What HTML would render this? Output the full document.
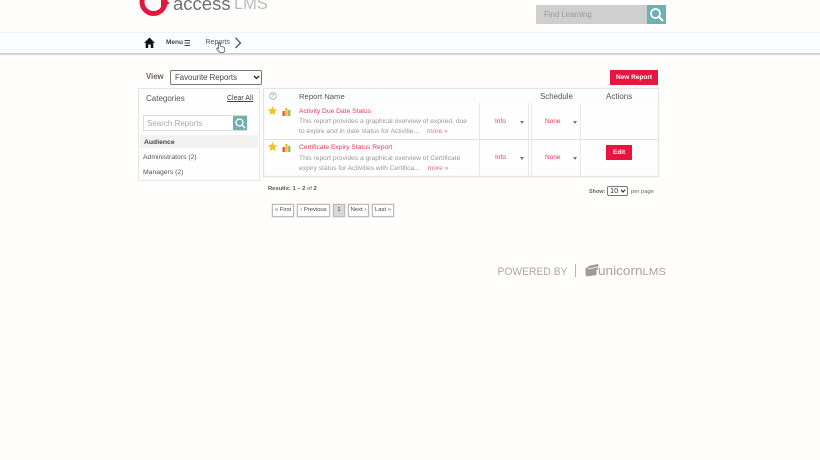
<!DOCTYPE html>
<html lang="en">
<head>
<meta charset="utf-8">
<title>Access LMS Reports</title>
<style>
html,body{margin:0;padding:0;background:#fffefc}
body{width:820px;height:460px;position:relative;overflow:hidden;font-family:"Liberation Sans",sans-serif;color:#444}
.a{position:absolute;white-space:nowrap}
.red{color:#ea3a5a}
.desc{font-size:6.700px;line-height:10px;color:#999}
.pg{position:absolute;top:204px;height:11px;border:1px solid #bbb;background:#fff;font-size:5.900px;line-height:11px;text-align:center;color:#444;box-shadow:0 0 0 1px #eee}
.sel{position:absolute;font-size:6.500px;color:#ea3a5a}
.caret{position:absolute;width:0;height:0;border-left:2.500px solid transparent;border-right:2.500px solid transparent;border-top:3px solid #777}
.vl{position:absolute;width:1px;background:#e6e8ec}
</style>
</head>
<body>
<svg class="a" style="left:0;top:0" width="820" height="460">
  <circle cx="153.500" cy="2" r="11.500" fill="none" stroke="#e0173f" stroke-width="5"/>
  <path d="M161 -5L169.500 3L161 10Z" fill="#e0173f"/>
  <rect x="0" y="32" width="820" height="21" fill="#fbfdff"/>
  <rect x="0" y="32" width="820" height="1" fill="#eef1f6"/>
  <rect x="0" y="53" width="820" height="1.500" fill="#c9ccd0"/>
  <rect x="0" y="54.500" width="820" height="1" fill="#eeeeee"/>
  <path d="M149.500 37.500L144 43H145.700V48H148.200V44.500H150.800V48H153.300V43H155Z" fill="#111"/>
  <path d="M184.500 40.500H190M184.500 43H190M184.500 45.500H190" stroke="#444" stroke-width="1"/>
  <path d="M235.500 37.800L240.500 43L235.500 48" fill="none" stroke="#555" stroke-width="1.300"/>
  <path d="M218.500 49V43.500C218.500 41.800 220.300 41.800 220.300 43.500V46L223.500 47C225 47.500 225 49 224.800 50.500L223.800 52.500H220L217 49.500C216 48.300 217.500 47.300 218.500 48.500Z" fill="#f4f6f8" fill-opacity=".75" stroke="#555" stroke-width=".8"/>

  <rect x="536" y="5" width="111" height="19" fill="#cfcfcf"/>
  <rect x="647" y="5" width="19" height="19" fill="#6fb0b0"/>
  <circle cx="655.500" cy="13.500" r="4.500" fill="none" stroke="#fff" stroke-width="1.700"/>
  <path d="M659 17L663 21" stroke="#fff" stroke-width="2"/>

  <rect x="138.500" y="88.500" width="121" height="92" fill="#fefefe" stroke="#e4e5e8"/>
  <rect x="263.500" y="88.500" width="395" height="88" fill="#fefefe" stroke="#e4e5e8" stroke-width="1.400"/>
  <rect x="264" y="89" width="394" height="14" fill="#fbfdfe"/>
  <rect x="264" y="139" width="394" height="1" fill="#dfe1e4"/>
  <rect x="140" y="135" width="118" height="13" fill="#f3f2f1"/>

  <rect x="143.500" y="115.500" width="103" height="15" fill="#fff" stroke="#dcdcdc"/>
  <rect x="233" y="116" width="14" height="14" fill="#6fb0b0"/>
  <circle cx="239.500" cy="122.500" r="3.500" fill="none" stroke="#fff" stroke-width="1.300"/>
  <path d="M242 125L245 128" stroke="#fff" stroke-width="1.500"/>

  <circle cx="273" cy="96" r="3.300" fill="none" stroke="#aaa" stroke-width=".8"/>
  <text x="271.500" y="98" font-family="'Liberation Sans',sans-serif" font-size="5" fill="#999">?</text>
  <path d="M272.500 106L273.900 109.200L277.300 109.500L274.700 111.700L275.500 115L272.500 113.300L269.500 115L270.300 111.700L267.700 109.500L271.100 109.200Z" fill="#f3c31c"/>
  <path d="M272.500 142L273.900 145.200L277.300 145.500L274.700 147.700L275.500 151L272.500 149.300L269.500 151L270.300 147.700L267.700 145.500L271.100 145.200Z" fill="#f3c31c"/>
  <rect x="282.500" y="111" width="2.300" height="5" fill="#ea4b4b"/>
  <rect x="285.300" y="108" width="2.300" height="8" fill="#f3b82c"/>
  <rect x="288.100" y="110" width="2.300" height="6" fill="#8cbf5a"/>
  <rect x="282.500" y="147" width="2.300" height="5" fill="#ea4b4b"/>
  <rect x="285.300" y="144" width="2.300" height="8" fill="#f3b82c"/>
  <rect x="288.100" y="146" width="2.300" height="6" fill="#8cbf5a"/>

  <text x="497.500" y="275" font-family="'Liberation Sans',sans-serif" font-size="11" fill="#a9a9a9" textLength="70" lengthAdjust="spacingAndGlyphs">POWERED BY</text>
  <rect x="575" y="264" width="1" height="13" fill="#b5b5b5"/>
  <path d="M585.500 268.500L590 265.500L598.500 264L598 269.500L596.500 270V275L587 276.500L585.500 275Z" fill="#9c9c9c"/>
  <path d="M588 269L598 267" stroke="#fff" stroke-width=".8"/>
  <text x="598" y="275" font-family="'Liberation Sans',sans-serif" font-size="12.500" fill="#a3a3a3" textLength="68" lengthAdjust="spacingAndGlyphs">unicorn<tspan font-size="10.500">LMS</tspan></text>
</svg>

<div class="a" style="left:173px;top:-6.500px;font-size:18.500px;line-height:20px;color:#6f7275">access</div>
<div class="a" style="left:234px;top:-6.500px;font-size:16.500px;line-height:20px;color:#b9bbbd">LMS</div>
<div class="a" style="left:166px;top:39px;font-size:6.500px;font-weight:bold;color:#444">Menu</div>
<div class="a" style="left:205.500px;top:39px;font-size:7px;color:#555">Reports</div>
<div class="a" style="left:544px;top:10px;font-size:7.800px;color:#999">Find Learning</div>

<div class="a" style="left:146px;top:72px;font-size:7.800px;font-weight:bold;color:#666">View</div>
<div class="a" style="left:170px;top:70px;width:90px;height:13px;border:1px solid #777;border-radius:2px;background:#fff;font-size:7.800px;line-height:13px;text-indent:4px;color:#444">Favourite Reports</div>
<svg class="a" style="left:253px;top:75px" width="7" height="5"><path d="M1 1L3.500 3.500L6 1" fill="none" stroke="#222" stroke-width="1.300"/></svg>
<div class="a" style="left:610px;top:70px;width:48px;height:15px;background:#e8163f;color:#fff;font-size:6.500px;font-weight:bold;line-height:15px;text-align:center">New Report</div>

<div class="a" style="left:146px;top:93.500px;font-size:8px;color:#555">Categories</div>
<div class="a" style="left:227px;top:95px;font-size:7px;color:#444;text-decoration:underline">Clear All</div>
<div class="a" style="left:147px;top:119px;font-size:8px;color:#aaa">Search Reports</div>
<div class="a" style="left:144px;top:138.500px;font-size:6.800px;font-weight:bold;color:#444">Audience</div>
<div class="a" style="left:143px;top:153.500px;font-size:6.800px;color:#555">Administrators (2)</div>
<div class="a" style="left:143px;top:168.500px;font-size:6.800px;color:#555">Managers (2)</div>

<div class="a" style="left:299px;top:91.500px;font-size:7.700px;color:#555">Report Name</div>
<div class="a" style="left:540px;top:91.500px;font-size:7.900px;color:#555">Schedule</div>
<div class="a" style="left:606px;top:91.500px;font-size:8px;color:#555">Actions</div>

<div class="a red" style="left:299px;top:107.500px;font-size:6.700px">Activity Due Date Status</div>
<div class="a desc" style="left:299px;top:117px">This report provides a graphical overview of expired, due<br>to expire and in date status for Activitie... <span style="color:#e8163f;opacity:.65;margin-left:6px">more »</span></div>
<div class="a red" style="left:299px;top:143.500px;font-size:6.700px">Certificate Expiry Status Report</div>
<div class="a desc" style="left:299px;top:154px">This report provides a graphical overview of Certificate<br>expiry status for Activities with Certifica... <span style="color:#e8163f;opacity:.65;margin-left:6px">more »</span></div>

<div class="vl" style="left:479px;top:103px;height:73px"></div>
<div class="vl" style="left:528px;top:103px;height:73px"></div>
<div class="vl" style="left:531px;top:103px;height:73px"></div>
<div class="vl" style="left:580px;top:103px;height:73px"></div>

<div class="sel" style="left:495px;top:117.500px">Info</div>
<div class="caret" style="left:520px;top:121px"></div>
<div class="sel" style="left:545px;top:117.500px">None</div>
<div class="caret" style="left:572.500px;top:121px"></div>
<div class="sel" style="left:495px;top:153.500px">Info</div>
<div class="caret" style="left:520px;top:157px"></div>
<div class="sel" style="left:545px;top:153.500px">None</div>
<div class="caret" style="left:572.500px;top:157px"></div>

<div class="a" style="left:606px;top:145px;width:26px;height:15px;background:#e8163f;color:#fff;font-size:6.500px;font-weight:bold;line-height:15px;text-align:center">Edit</div>

<div class="a" style="left:268px;top:185.500px;font-size:5.800px;color:#555"><b>Results:</b> <b>1 – 2</b> of <b>2</b></div>
<div class="a" style="left:589px;top:188.500px;font-size:5.500px;color:#666"><b>Show:</b></div>
<div class="a" style="left:607px;top:186px;width:19px;height:8px;border:1px solid #777;border-radius:2px;background:#fff;font-size:7.500px;line-height:8px;text-indent:2px;color:#333">10</div>
<svg class="a" style="left:620px;top:188.500px" width="6" height="4"><path d="M1 .8L3 3L5 .8" fill="none" stroke="#222" stroke-width="1.100"/></svg>
<div class="a" style="left:631px;top:188.500px;font-size:5.800px;color:#666">per page</div>

<div class="pg" style="left:272px;width:20px">« First</div>
<div class="pg" style="left:297px;width:31px">‹ Previous</div>
<div class="pg" style="left:333px;width:10px;background:#d9d9d9">1</div>
<div class="pg" style="left:348px;width:19px">Next ›</div>
<div class="pg" style="left:372px;width:20px">Last »</div>
</body>
</html>
